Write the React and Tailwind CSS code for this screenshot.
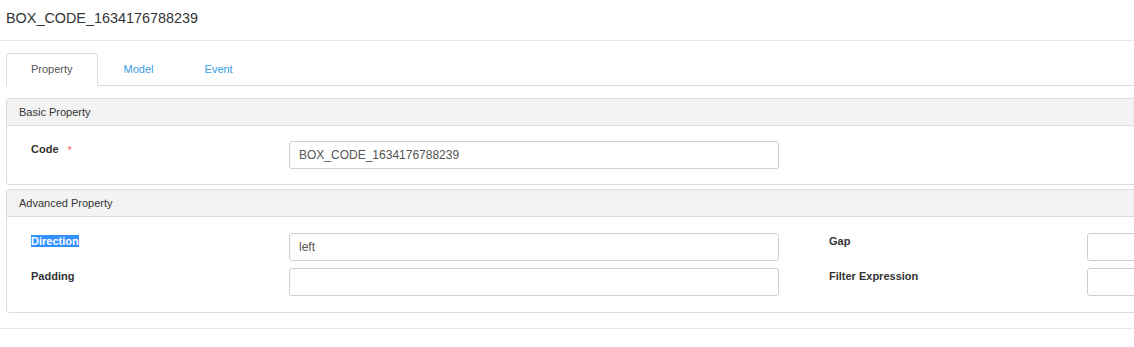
import React from 'react'

const font = { fontFamily: '"Liberation Sans", Arial, sans-serif' }

function Field({ label, value, required, selected }) {
  return (
    <div className="flex items-start">
      <div className="w-[270px] pl-3 text-[11px] leading-[16px] font-bold text-[#333]">
        {selected ? (
          <span className="bg-[#3390ff] text-white">{label}</span>
        ) : (
          label
        )}
        {required && (
          <span className="relative top-[1px] ml-[9px] text-[#ff5b5b] font-normal">*</span>
        )}
      </div>
      <div className="w-[490px] shrink-0">
        <input
          readOnly
          value={value || ''}
          className="w-full h-[28px] border border-[#cfcfcf] rounded-[3px] px-[9px] text-[12px] text-[#555] outline-none bg-white"
        />
      </div>
      <div className="w-[38px] shrink-0" />
    </div>
  )
}

function Panel({ title, children, className = '' }) {
  return (
    <div className={`border border-[#dcdcdc] rounded-[3px] ${className}`}>
      <div className="h-[27px] bg-[#f3f3f3] border-b border-[#dcdcdc] flex items-center pl-3 text-[11px] text-[#333]">
        {title}
      </div>
      {children}
    </div>
  )
}

export default function App() {
  return (
    <div className="w-[1134px] h-[347px] overflow-hidden bg-white" style={font}>
      <div className="w-[1700px]">
        <div className="h-[41px] border-b border-[#e6e6e6] pl-[6px] pt-2 text-[14.4px] leading-[20px] text-[#333]">
          BOX_CODE_1634176788239
        </div>

        <div className="px-[6px] pt-3">
          {/* tabs */}
          <div className="flex border-b border-[#dcdcdc] h-[33px]">
            <div className="h-[33px] -mb-px px-6 border border-[#dcdcdc] border-b-white rounded-t-[3px] bg-white flex items-center text-[11px] text-[#555]">
              Property
            </div>
            <div className="h-[32px] ml-[1px] px-6 border border-transparent flex items-center text-[11px] text-[#359ee6]">
              Model
            </div>
            <div className="h-[32px] ml-[1px] px-6 border border-transparent flex items-center text-[11px] text-[#359ee6]">
              Event
            </div>
          </div>

          <Panel title="Basic Property" className="mt-3">
            <div className="pl-3 pt-[15px] pb-[15px] grid grid-cols-[798px_798px]">
              <Field label="Code" value="BOX_CODE_1634176788239" required />
            </div>
          </Panel>

          <Panel title="Advanced Property" className="mt-[4px]">
            <div className="pl-3 pt-4 pb-4 grid grid-cols-[798px_798px] gap-y-[7px]">
              <Field label="Direction" value="left" selected />
              <Field label="Gap" />
              <Field label="Padding" />
              <Field label="Filter Expression" />
            </div>
          </Panel>
        </div>

        <div className="mt-[15px] border-b border-[#e6e6e6]" />
      </div>
    </div>
  )
}
